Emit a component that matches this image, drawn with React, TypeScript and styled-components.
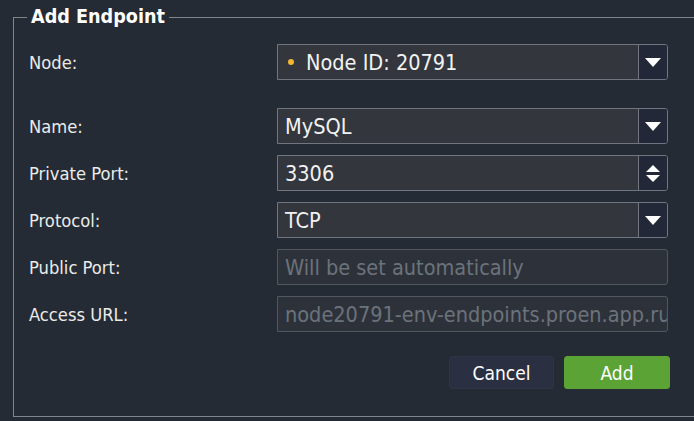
import React from "react";
import styled, { createGlobalStyle } from "styled-components";

const Global = createGlobalStyle`
  html, body { margin: 0; padding: 0; background: #242b35; overflow: hidden; }
  body { font-family: "DejaVu Sans", "Liberation Sans", sans-serif; font-stretch: condensed; }
  #root { width: 694px; height: 421px; }
`;

const Frame = styled.fieldset`
  margin: 5px 0 0 13px;
  padding: 15px 0 0 15px;
  width: 681px;
  height: 412px;
  border: 1px solid #80868e;
  border-right: none;
  box-sizing: border-box;
  min-width: 0;
`;

const Legend = styled.legend`
  margin-left: -2px;
  padding: 0 4px;
  font-size: 19.6px;
  font-weight: bold;
  line-height: 24px;
  color: #ffffff;
`;

const Form = styled.div`
  display: grid;
  grid-template-columns: 248px 391px;
  row-gap: 11px;
  align-items: center;
`;

const Label = styled.div<{ $gap?: boolean }>`
  font-size: 18.2px;
  color: #ebebeb;
  margin-bottom: ${(p) => (p.$gap ? "17px" : "0")};
`;

const Field = styled.div<{ $disabled?: boolean; $gap?: boolean }>`
  display: flex;
  height: 36px;
  box-sizing: border-box;
  border: 1px solid ${(p) => (p.$disabled ? "#50575f" : "#70767f")};
  border-radius: 0 3px 3px 0;
  background: ${(p) => (p.$disabled ? "#2d323a" : "#33363d")};
  margin-bottom: ${(p) => (p.$gap ? "17px" : "0")};
  overflow: hidden;
`;

const Value = styled.div<{ $disabled?: boolean }>`
  flex: 1;
  display: flex;
  align-items: center;
  gap: 12px;
  padding-left: 7px;
  font-size: 21.5px;
  color: ${(p) => (p.$disabled ? "#6c727b" : "#f2f2f2")};
  white-space: nowrap;
  overflow: hidden;
`;

const Dot = styled.span`
  width: 6px;
  height: 6px;
  border-radius: 50%;
  background: #f2b630;
  margin-left: 3px;
  flex: none;
`;

const Trigger = styled.div`
  width: 28px;
  flex: none;
  border-left: 1px solid #70767f;
  background: #232839;
  display: flex;
  flex-direction: column;
  align-items: center;
  justify-content: center;
  gap: 3px;
`;

const Down = styled.span<{ $small?: boolean }>`
  width: 0;
  height: 0;
  border-left: ${(p) => (p.$small ? "7px" : "8px")} solid transparent;
  border-right: ${(p) => (p.$small ? "7px" : "8px")} solid transparent;
  border-top: ${(p) => (p.$small ? "7px" : "9px")} solid #ffffff;
`;

const Up = styled.span`
  width: 0;
  height: 0;
  border-left: 7px solid transparent;
  border-right: 7px solid transparent;
  border-bottom: 7px solid #ffffff;
`;

const Actions = styled.div`
  display: flex;
  gap: 10px;
  margin: 24px 0 0 420px;
`;

const Button = styled.button<{ $primary?: boolean }>`
  height: 33px;
  width: ${(p) => (p.$primary ? "106px" : "105px")};
  border-radius: 3px;
  border: 1px solid ${(p) => (p.$primary ? "#5aa334" : "#2f3546")};
  background: ${(p) => (p.$primary ? "#5aa334" : "#2a3041")};
  color: #ffffff;
  font-family: inherit;
  font-stretch: condensed;
  font-size: 19px;
  padding: 0;
`;

export default function App() {
  return (
    <>
      <Global />
      <Frame>
        <Legend>Add Endpoint</Legend>
        <Form>
          <Label $gap>Node:</Label>
          <Field $gap>
            <Value>
              <Dot />
              Node ID: 20791
            </Value>
            <Trigger>
              <Down />
            </Trigger>
          </Field>

          <Label>Name:</Label>
          <Field>
            <Value>MySQL</Value>
            <Trigger>
              <Down />
            </Trigger>
          </Field>

          <Label>Private Port:</Label>
          <Field>
            <Value>3306</Value>
            <Trigger>
              <Up />
              <Down $small />
            </Trigger>
          </Field>

          <Label>Protocol:</Label>
          <Field>
            <Value>TCP</Value>
            <Trigger>
              <Down />
            </Trigger>
          </Field>

          <Label>Public Port:</Label>
          <Field $disabled>
            <Value $disabled>Will be set automatically</Value>
          </Field>

          <Label>Access URL:</Label>
          <Field $disabled>
            <Value $disabled>node20791-env-endpoints.proen.app.ruk</Value>
          </Field>
        </Form>
        <Actions>
          <Button>Cancel</Button>
          <Button $primary>Add</Button>
        </Actions>
      </Frame>
    </>
  );
}
